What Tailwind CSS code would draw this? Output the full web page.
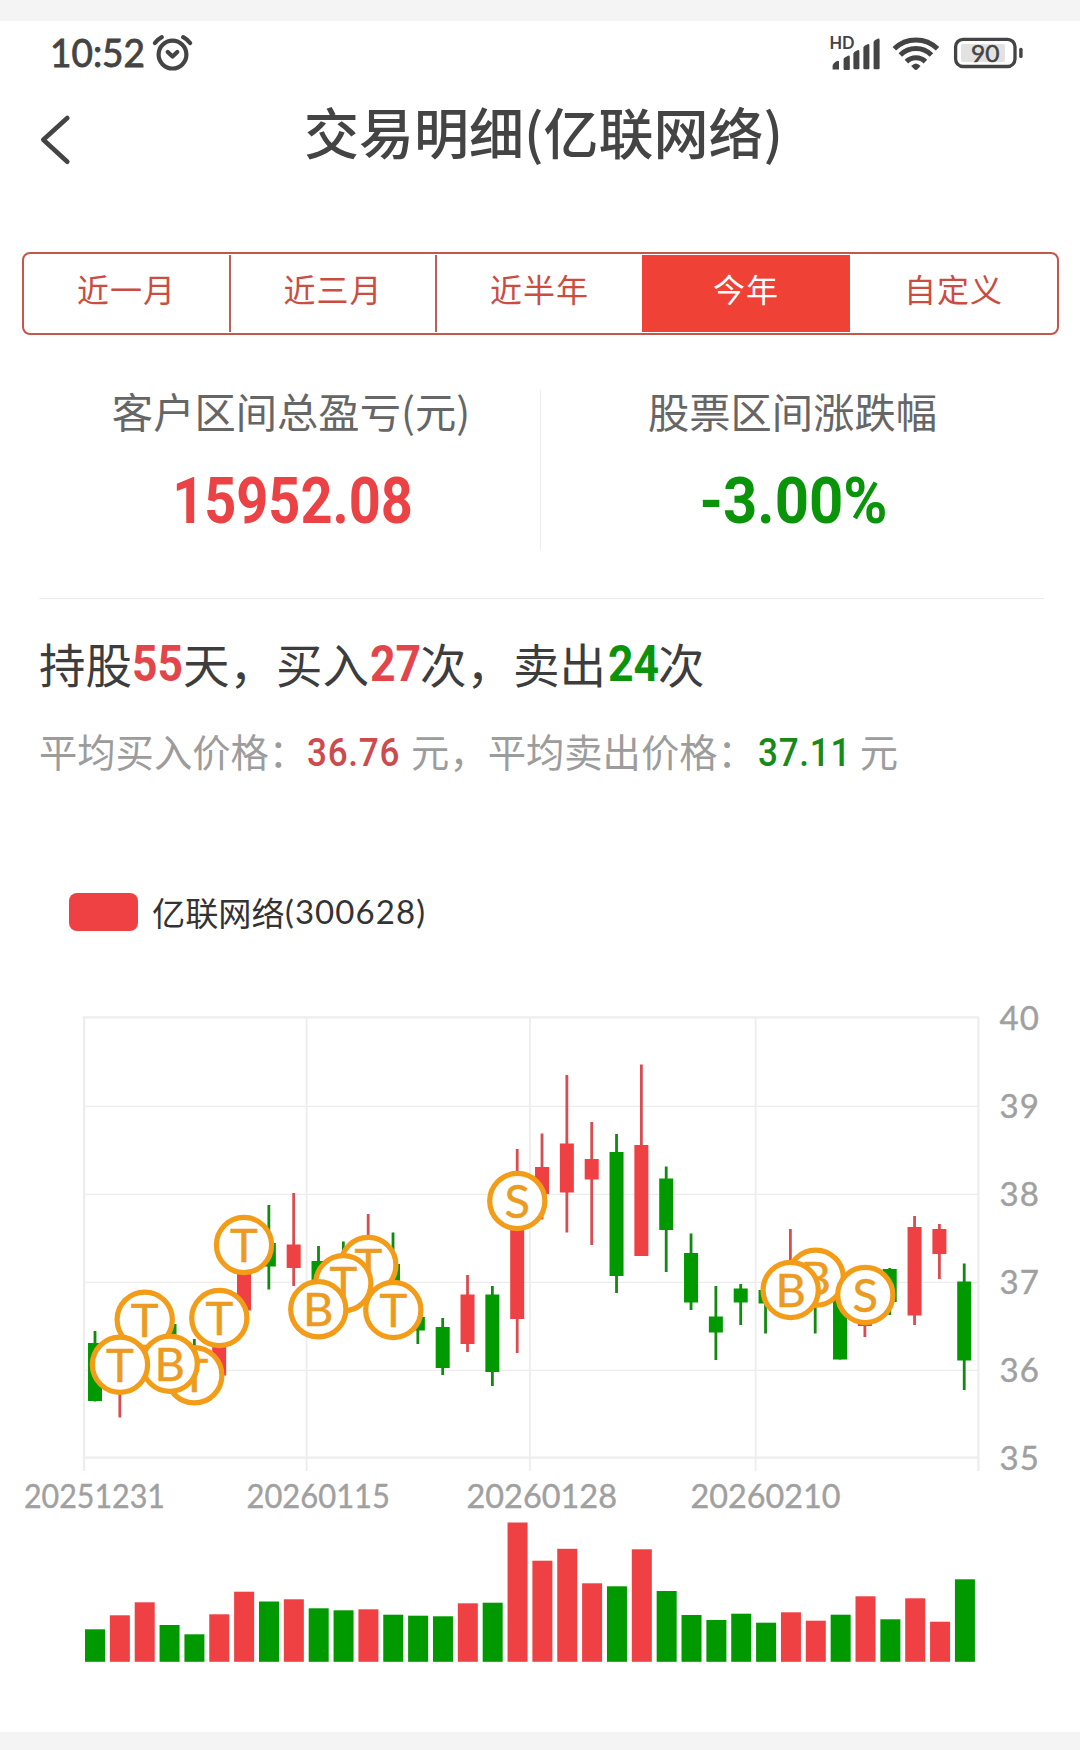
<!DOCTYPE html>
<html lang="zh-CN">
<head>
    <meta charset="UTF-8">
    <meta name="viewport" content="width=device-width, initial-scale=1.0">
    <title>交易明细</title>
    <script src="https://cdn.jsdelivr.net/npm/@tailwindcss/browser@4"></script>
</head>
<body class="bg-[#f4f4f4] pt-[21px] pb-[18px] font-['Noto_Sans_CJK_SC',sans-serif] text-[#444]">
    <main class="flex h-[1711px] w-[1080px] flex-col overflow-hidden bg-white">

        <!-- Status bar -->
        <div class="flex h-[65px] items-start justify-between pt-3 pr-[56px] pl-[49px]">
            <div class="flex items-start">
                <svg class="block overflow-visible font-['Lato'] font-normal" width="102" height="42" fill="#444">
                    <text x="1" y="34" font-size="38.5" stroke="#444" stroke-width="0.9" textLength="95" lengthAdjust="spacingAndGlyphs">10:52</text>
                </svg>
                <svg width="42" height="42" viewBox="151 33 42 42" fill="none" stroke="#444" stroke-width="4.2" stroke-linecap="round" stroke-linejoin="round">
                    <circle cx="172.5" cy="54.6" r="13.9" />
                    <path d="M167.7 51.9 L172.5 56.6 L177.3 51.9" />
                    <path d="M154.9 43 Q157.6 39.4 161.8 37.2" />
                    <path d="M183.2 37.2 Q187.4 39.4 190.1 43" />
                </svg>
            </div>
            <svg class="overflow-visible" width="196" height="42" viewBox="828 33 196 42" fill="#444">
                <text x="829.5" y="49.3" class="font-['Lato'] font-bold" font-size="16.5" textLength="25" lengthAdjust="spacingAndGlyphs">HD</text>
                <path d="M832.6 69.5V66Q833 63 837 61Q839 60.3 839 62V69.5Z" />
                <path d="M843.6 69V59Q844 57.5 848 55.7Q849.8 55.2 849.8 57V69Q849.8 70 848.8 70H844.6Q843.6 70 843.6 69Z" />
                <path d="M853.4 68V53.5Q853.7 51.7 857.5 50.2Q859.4 49.7 859.4 51.5V68Q859.4 69.3 858.2 69.3H854.6Q853.4 69.3 853.4 68Z" />
                <path d="M863.4 68V47.5Q863.7 45.7 867.5 44.2Q869.4 43.7 869.4 45.5V68Q869.4 69.3 868.2 69.3H864.6Q863.4 69.3 863.4 68Z" />
                <path d="M873.6 68V42Q873.9 40.2 877.7 38.7Q879.6 38.2 879.6 40V68Q879.6 69.3 878.4 69.3H874.8Q873.6 69.3 873.6 68Z" />
                <g fill="none" stroke="#444" stroke-width="5">
                    <path d="M894.3 48.8 A31 31 0 0 1 937.5 48.8" />
                    <path d="M900.3 55 A22 22 0 0 1 931.5 55" />
                    <path d="M906.4 61.6 A13.5 13.5 0 0 1 925.4 61.6" />
                </g>
                <path d="M911.2 66 Q915.9 61 920.6 66 L917.5 69.3 Q915.9 70.7 914.3 69.3Z" />
                <rect x="955.6" y="39.3" width="59.4" height="27.2" rx="7.5" fill="none" stroke="#444" stroke-width="3.3" />
                <rect x="961" y="44" width="44" height="18" rx="2" fill="#e2e2e2" />
                <text x="971" y="61.8" class="font-['Lato'] font-normal" font-size="23.5" textLength="28.5" lengthAdjust="spacingAndGlyphs" stroke="#444" stroke-width="0.5">90</text>
                <rect x="1019.2" y="47.7" width="3.4" height="10.4" rx="1.5" />
            </svg>
        </div>

        <!-- Title bar -->
        <header class="flex h-[88px] items-center">
            <svg width="34" height="52" viewBox="38 114 34 52" class="ml-[38px] mt-[19px]" fill="none" stroke="#444" stroke-width="4.6" stroke-linecap="round" stroke-linejoin="round">
                <path d="M67.3 118 L43.3 139.8 L67.3 161.8" />
            </svg>
            <h1 class="flex-1 pr-[65px] text-center text-[55px] leading-[80px] font-medium">交易明细(亿联网络)</h1>
        </header>

        <!-- Period tabs -->
        <nav class="mt-[78px] mr-[21px] ml-[22px] flex h-[83px] rounded-lg border-2 border-[#c4564c] py-px text-[32px] leading-[67px] tracking-[1px] text-[#cb4d42]">
            <a class="w-[207px] border-r-2 border-[#b9605a] text-center">近一月</a>
            <a class="w-[206px] border-r-2 border-[#b9605a] text-center">近三月</a>
            <a class="w-[205px] text-center">近半年</a>
            <a class="w-[208px] bg-[#ef4136] text-center text-white">今年</a>
            <a class="flex-1 text-center">自定义</a>
        </nav>

        <!-- Profit summary -->
        <section class="mt-[55px] flex h-[160px] text-center">
            <div class="w-[540px] pl-[42px]">
                <div class="h-[62px] text-[41.3px] leading-[41px] whitespace-nowrap text-[#666]">客户区间总盈亏(元)</div>
                <div class="ml-[3px] scale-x-[0.86] font-['Roboto'] text-[65px] leading-[99px] font-bold text-[#ea4245]">15952.08</div>
            </div>
            <div class="flex-1 border-l border-[#ececec] pr-[36px]">
                <div class="h-[62px] text-[41.3px] leading-[41px] whitespace-nowrap text-[#666]">股票区间涨跌幅</div>
                <div class="ml-[2px] scale-x-[0.92] font-['Roboto'] text-[65px] leading-[99px] font-bold text-[#099409]">-3.00%</div>
            </div>
        </section>

        <!-- Trade counts and average prices -->
        <section class="mt-[48px] ml-[39px] h-[212px] w-[1005px] border-t border-[#ececec] whitespace-nowrap">
            <p class="mt-[31px] flex text-[46.5px] leading-[66px] text-[#3d3d3d]">
                <span>持股</span>
                <span class="w-[51px] origin-left translate-y-px scale-x-[0.9] font-['Roboto'] text-[49.5px] font-bold text-[#e2464a]">55</span>
                <span>天，买入</span>
                <span class="ml-px w-[50px] origin-left translate-y-px scale-x-[0.9] font-['Roboto'] text-[49.5px] font-bold text-[#e2464a]">27</span>
                <span>次，卖出</span>
                <span class="ml-[2px] w-[50px] origin-left translate-y-px scale-x-[0.9] font-['Roboto'] text-[49.5px] font-bold text-[#0b930b]">24</span>
                <span>次</span>
            </p>
            <p class="mt-[24px] flex text-[38.3px] leading-[62px] text-[#9c9c9c]">
                <span>平均买入价格：</span>
                <span class="w-[104px] origin-left translate-y-[2px] scale-x-[0.9] font-['Roboto'] text-[39px] font-medium tracking-[0.8px] text-[#cd4a4d]">36.76</span>
                <span>元，平均卖出价格：</span>
                <span class="ml-[2px] w-[102px] origin-left translate-y-[2px] scale-x-[0.9] font-['Roboto'] text-[39px] font-medium tracking-[0.8px] text-[#178a17]">37.11</span>
                <span>元</span>
            </p>
        </section>

        <!-- Legend -->
        <div class="mt-[82px] ml-[69px] flex h-[40px] items-center text-[#333]">
            <span class="h-[38px] w-[69px] rounded-lg bg-[#ef4144]"></span>
            <span class="ml-[14px] text-[33.2px] leading-[38px]">亿联网络</span>
            <svg class="overflow-visible" width="144" height="40" fill="#333"><text x="0" y="32" class="font-['Lato']" font-size="33" textLength="140">(300628)</text></svg>
        </div>

        <!-- Candles, trade marks and volume -->
        <svg id="chart" class="mt-[68px] block shrink-0 overflow-visible font-['Lato']" width="1080" height="680" viewBox="0 1000 1080 680"></svg>
    </main>

    <script>
        const RED = '#ef4144';
        const GREEN = '#009900';
        const STEP = 24.855;

        // [color, high, open/close top, open/close bottom, low]
        const candles = [
            ['g', 1331, 1343, 1401, 1401.5], ['r', 1350, 1355, 1385, 1417.5], ['r', 1305, 1310, 1330, 1335],
            ['g', 1324, 1324, 1365, 1370], ['g', 1339, 1355, 1385, 1390], ['r', 1315, 1320, 1375.5, 1375.5],
            ['r', 1250, 1255, 1310.5, 1310.5], ['g', 1205, 1243, 1266.5, 1289.5], ['r', 1193, 1244.5, 1268, 1286],
            ['g', 1246, 1261, 1300, 1310], ['g', 1241.5, 1270, 1290, 1295], ['r', 1214, 1255, 1270, 1275],
            ['g', 1232.5, 1264, 1295, 1300], ['g', 1316, 1317, 1330.5, 1344], ['g', 1318, 1327, 1368, 1375],
            ['r', 1275, 1294.5, 1344, 1352], ['g', 1286, 1294.5, 1372, 1386], ['r', 1149, 1200, 1319, 1353],
            ['r', 1133.5, 1167, 1194, 1219.5], ['r', 1075, 1143.5, 1192.5, 1232.5], ['r', 1122, 1159, 1179.5, 1245],
            ['g', 1134, 1152, 1276, 1293], ['r', 1064.5, 1145, 1256, 1256], ['g', 1166.5, 1178.5, 1230, 1272],
            ['g', 1233.5, 1253, 1302.5, 1310], ['g', 1286, 1316.5, 1332.5, 1360], ['g', 1284, 1288.5, 1302.5, 1325],
            ['g', 1290, 1290, 1303.5, 1333.5], ['r', 1229, 1280, 1300, 1305], ['g', 1270, 1275, 1300, 1333.5],
            ['g', 1285, 1290, 1359.5, 1359.5], ['r', 1290, 1300, 1326, 1337], ['g', 1268, 1269, 1302, 1315],
            ['r', 1216, 1227, 1315.5, 1325], ['r', 1224, 1229, 1254, 1279], ['g', 1263.5, 1281.5, 1360.5, 1390]
        ];

        const volumeColors = 'grrggrrgrggrgggrgrrrrgrgggggrrgrgrrg';
        const volumeTops = [
            1629.3, 1615.3, 1602.3, 1625, 1634.3, 1614.3, 1591.7, 1601.5, 1599.3, 1608.3, 1610.3, 1609.3,
            1614.7, 1615.7, 1616.3, 1603.3, 1602.7, 1522.5, 1560.7, 1548.8, 1583.3, 1586.3, 1549.3, 1591,
            1615, 1620, 1613.7, 1622.7, 1612.3, 1620.7, 1614.7, 1596.3, 1619.3, 1598.3, 1621.7, 1579.3
        ];

        // Later marks lie over earlier ones
        const marks = [
            ['T', 194.3, 1375.3], ['T', 144.7, 1319.7], ['B', 169.7, 1363.7], ['T', 120, 1364.7],
            ['T', 219.3, 1318], ['T', 244, 1245], ['T', 368.3, 1265], ['T', 343.3, 1283.3],
            ['B', 318.3, 1309.3], ['T', 393.3, 1310], ['S', 517.3, 1201],
            ['B', 815.7, 1277.7], ['B', 790.7, 1290], ['S', 865.3, 1295]
        ];

        const dates = [
            ['20251231', 24, 141], ['20260115', 246.5, 143.5], ['20260128', 466.5, 150.5], ['20260210', 690.5, 150]
        ];

        const rect = (x, y, w, h, fill) => `<rect x="${x}" y="${y}" width="${w}" height="${h}" fill="${fill}" />`;
        let out = '';

        // Grid
        for (let i = 1; i < 5; i++) out += rect(84, 1017.8 + i * 88, 894, 1.2, '#ececec');
        [83, 305.7, 529, 754.7, 977.3].forEach((x, i) => {
            out += rect(x, 1017, i % 4 ? 1.8 : 2.2, 454, '#ededed');
        });
        out += rect(82.5, 1016.2, 896.5, 2.4, '#eeeeee') + rect(82.5, 1456.4, 896.5, 2.4, '#eeeeee');

        // Axis labels
        for (let i = 0; i <= 5; i++) {
            out += `<text x="999.5" y="${1030 + i * 88}" font-size="33" fill="#a0a0a0" stroke="#a0a0a0" stroke-width="0.4" textLength="39.5">${40 - i}</text>`;
        }
        dates.forEach(([label, x, w]) => {
            out += `<text x="${x}" y="1508" font-size="33" fill="#a0a0a0" stroke="#a0a0a0" stroke-width="0.4" textLength="${w}" lengthAdjust="spacingAndGlyphs">${label}</text>`;
        });

        candles.forEach(([c, high, top, bottom, low], i) => {
            const x = 95 + i * (STEP - 0.02);
            const color = c === 'r' ? RED : GREEN;
            out += rect(x - 1.4, high, 2.8, low - high, c === 'r' ? '#d94c50' : '#128a12');
            out += rect(x - 7, top, 14, bottom - top, color);
        });

        volumeTops.forEach((top, i) => {
            out += rect(85 + i * STEP, top, 20, 1661.8 - top, volumeColors[i] === 'r' ? RED : GREEN);
        });

        marks.forEach(([letter, x, y]) => {
            out += `<circle cx="${x}" cy="${y}" r="27.6" fill="#fff" stroke="#f39c18" stroke-width="5.2" />`;
            out += `<text x="${x}" y="${y + 17}" font-size="47" fill="#ec9b22" stroke="#ec9b22" stroke-width="0.5" text-anchor="middle">${letter}</text>`;
        });

        document.getElementById('chart').innerHTML = out;
    </script>
</body>
</html>
